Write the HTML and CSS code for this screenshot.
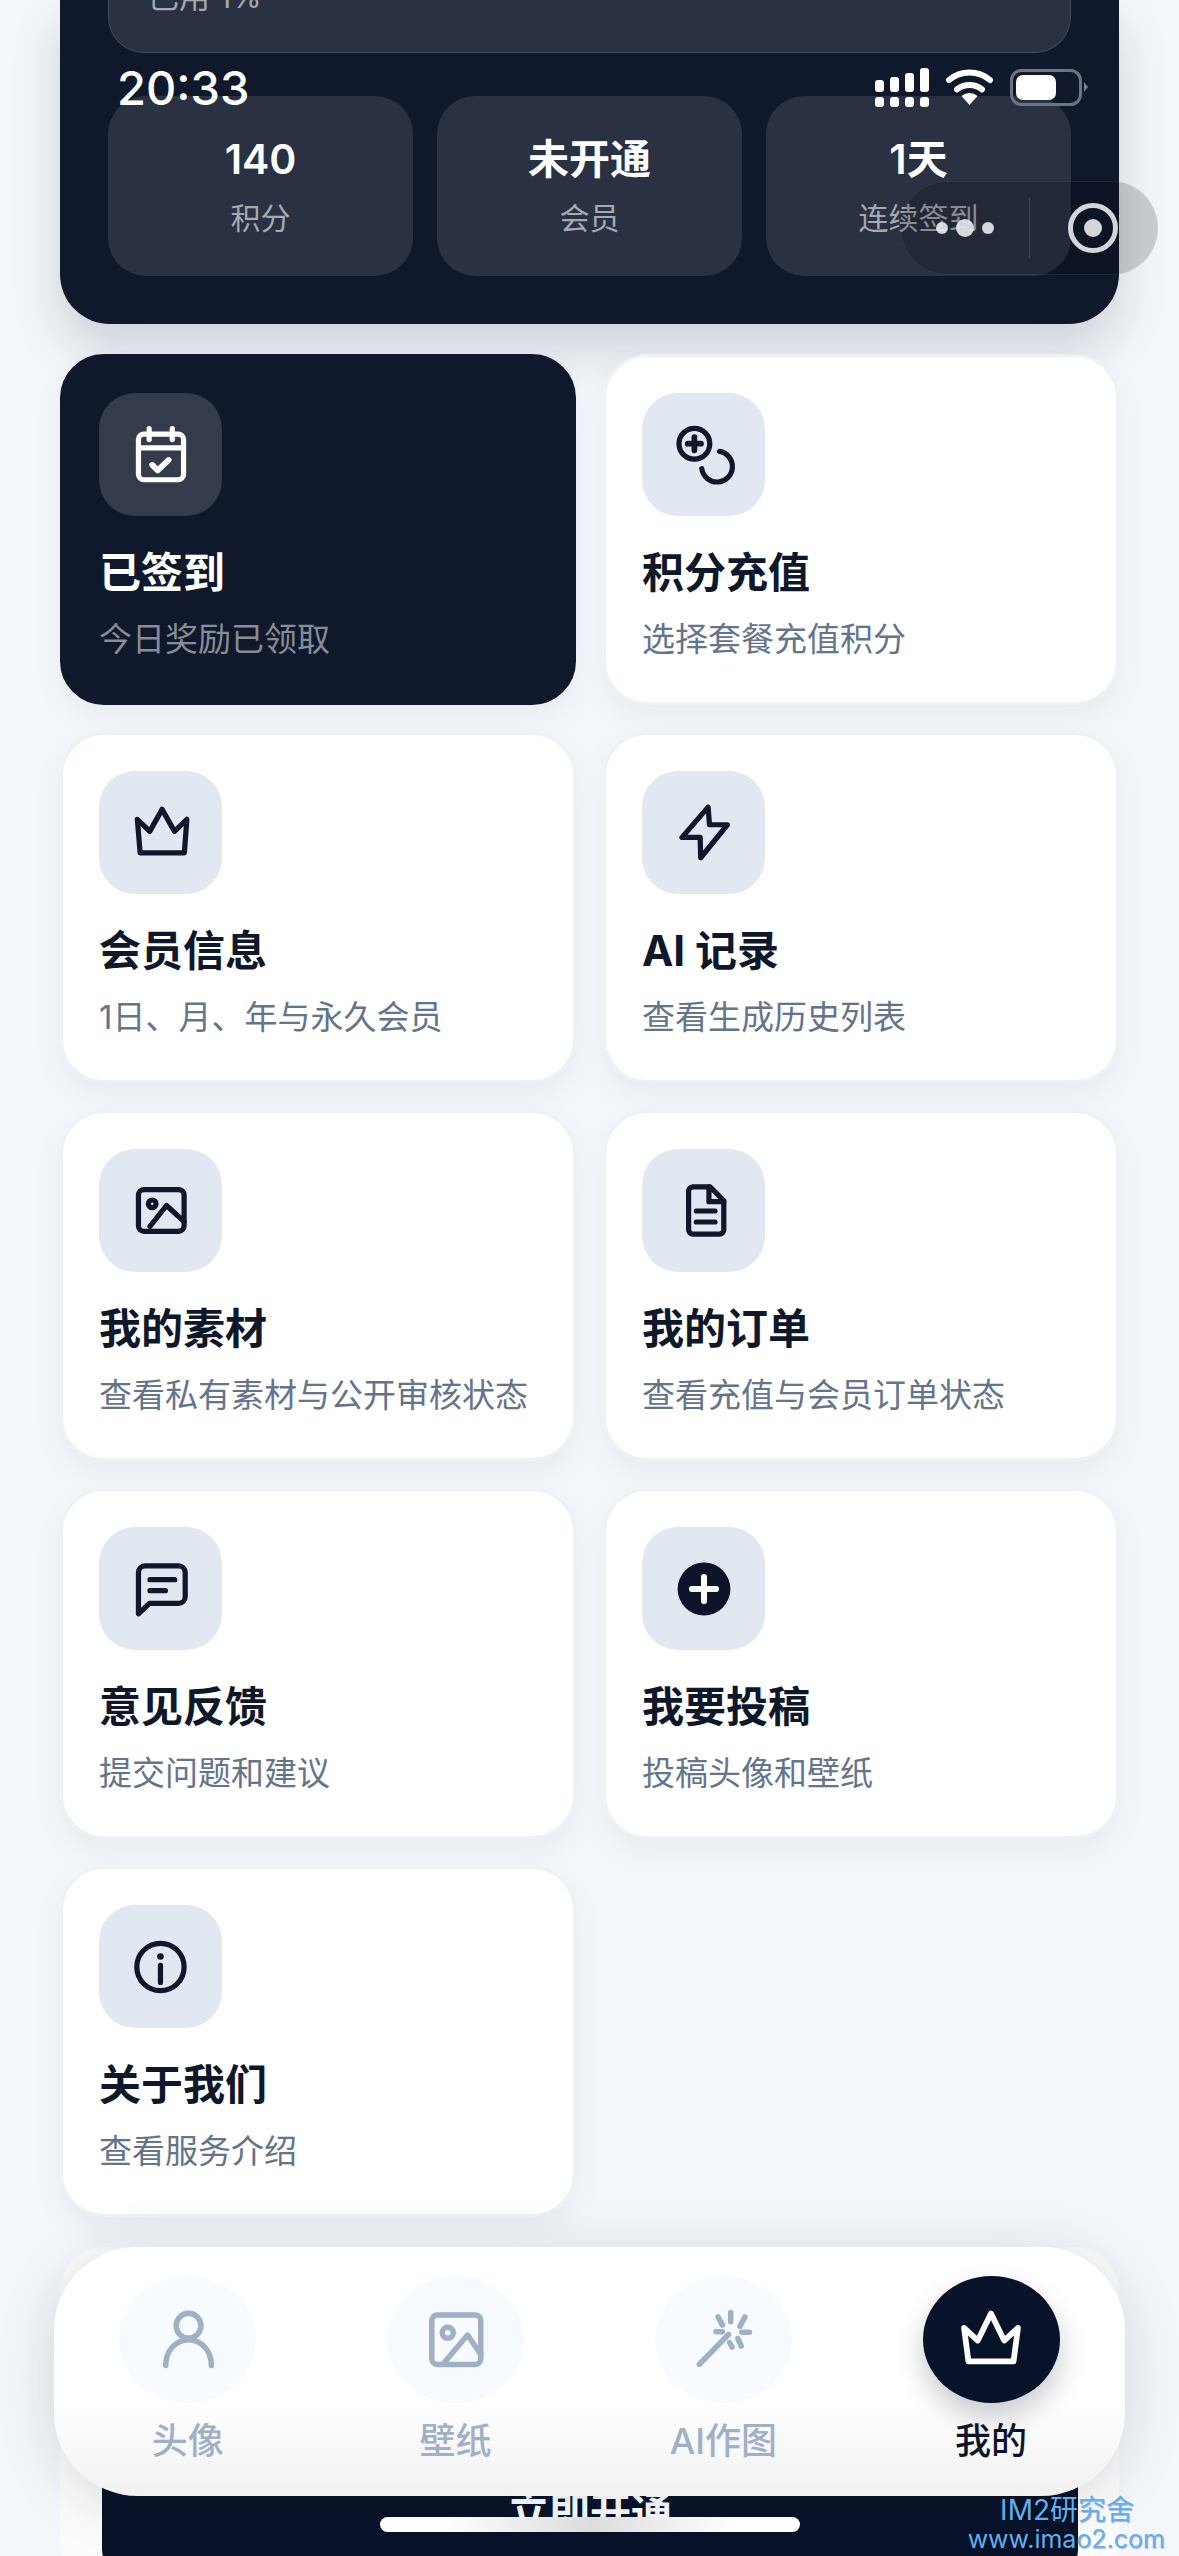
FILE: index.html
```html
<!DOCTYPE html>
<html lang="zh-CN">
<head>
  <meta charset="UTF-8">
  <title>我的</title>
  <link rel="stylesheet" href="styles.css">
</head>
<body>
  <div id="page">
    <!-- Account header, page is scrolled so the top is cut off -->
    <section class="hero">
      <div class="quota"><span class="quota-text">已用 1%</span></div>
      <div class="stats">
        <div class="stat"><div class="stat-value">140</div><div class="stat-label">积分</div></div>
        <div class="stat"><div class="stat-value">未开通</div><div class="stat-label">会员</div></div>
        <div class="stat"><div class="stat-value">1天</div><div class="stat-label">连续签到</div></div>
      </div>
    </section>

    <section class="grid">
      <div class="card card-dark">
        <div class="icon-box">
          <svg class="icon" viewBox="0 0 24 24"><rect x="3.8" y="4.4" width="16.4" height="16.6" rx="2"/><path d="M7.7 2.4v4M16.1 2.4v4M3.8 9.4h16.4"/><path class="thick" d="M8.8 15.6l2 2 4-3.8"/></svg>
        </div>
        <div class="card-title">已签到</div>
        <div class="card-sub">今日奖励已领取</div>
      </div>
      <div class="card">
        <div class="icon-box">
          <svg class="icon" viewBox="0 0 24 24"><circle cx="8.5" cy="7.9" r="5.6"/><path class="thick" d="M8.5 5.5v4.8M6.1 7.9h4.8"/><path d="M17.7 10.7A5.6 5.6 0 1 1 11.2 17"/></svg>
        </div>
        <div class="card-title">积分充值</div>
        <div class="card-sub">选择套餐充值积分</div>
      </div>
      <div class="card">
        <div class="icon-box">
          <svg class="icon" viewBox="0 0 24 24"><path d="M3.4 7l4.5 4.4 4.5-8 4.5 8 4.5-4.4-.9 12.2H4.4z"/></svg>
        </div>
        <div class="card-title">会员信息</div>
        <div class="card-sub">1日、月、年与永久会员</div>
      </div>
      <div class="card">
        <div class="icon-box">
          <svg class="icon" viewBox="0 0 24 24"><path d="M13.5 2.6L4 13.6h6.6l.2 7.4 9.7-12H14z"/></svg>
        </div>
        <div class="card-title">AI 记录</div>
        <div class="card-sub">查看生成历史列表</div>
      </div>
      <div class="card">
        <div class="icon-box">
          <svg class="icon" viewBox="0 0 24 24"><rect x="3.8" y="4.2" width="16.6" height="15.2" rx="2"/><circle cx="8.8" cy="9.4" r="1.4"/><path d="M8 17.6l6-7.6 6.4 5.8"/></svg>
        </div>
        <div class="card-title">我的素材</div>
        <div class="card-sub">查看私有素材与公开审核状态</div>
      </div>
      <div class="card">
        <div class="icon-box">
          <svg class="icon" viewBox="0 0 24 24"><path d="M8 3.2h6.2l5 5v10.6a1.6 1.6 0 0 1-1.6 1.6H8a1.6 1.6 0 0 1-1.6-1.6V4.8A1.6 1.6 0 0 1 8 3.2z"/><path d="M13.8 3.2v5.4h5.4M9.2 12H16M9.2 16H16"/></svg>
        </div>
        <div class="card-title">我的订单</div>
        <div class="card-sub">查看充值与会员订单状态</div>
      </div>
      <div class="card">
        <div class="icon-box">
          <svg class="icon" viewBox="0 0 24 24"><path d="M3.8 21V6a2.4 2.4 0 0 1 2.4-2.4h12.2A2.4 2.4 0 0 1 20.8 6v8.8a2.4 2.4 0 0 1-2.4 2.4H7.8z"/><path d="M8 8.6h9M8 12.6h5.6"/></svg>
        </div>
        <div class="card-title">意见反馈</div>
        <div class="card-sub">提交问题和建议</div>
      </div>
      <div class="card">
        <div class="icon-box">
          <svg class="icon" viewBox="0 0 24 24"><circle class="solid" cx="12" cy="12" r="9.6"/><path class="plus" d="M12 7.6v8.8M7.6 12h8.8"/></svg>
        </div>
        <div class="card-title">我要投稿</div>
        <div class="card-sub">投稿头像和壁纸</div>
      </div>
      <div class="card">
        <div class="icon-box">
          <svg class="icon" viewBox="0 0 24 24"><circle cx="11.8" cy="12" r="8.6"/><path d="M11.8 11.4v6.2"/><circle class="dot" cx="11.8" cy="8.2" r="1.2"/></svg>
        </div>
        <div class="card-title">关于我们</div>
        <div class="card-sub">查看服务介绍</div>
      </div>
    </section>

    <section class="vip-card">
      <div class="vip-btn">立即开通</div>
    </section>
  </div>

  <!-- Things lying over the page -->
  <div class="status-bar">
    <span class="time">20:33</span>
    <svg class="status-icons" width="213" height="40" viewBox="0 0 213 40">
      <g fill="#fff">
        <rect x="0" y="12" width="9" height="12" rx="3"/><rect x="15" y="9" width="9" height="15" rx="3"/>
        <rect x="30" y="5" width="9" height="19" rx="3"/><rect x="45" y="0" width="9" height="24" rx="3"/>
        <rect x="0" y="29" width="9" height="10" rx="3"/><rect x="15" y="29" width="9" height="10" rx="3"/>
        <rect x="30" y="29" width="9" height="10" rx="3"/><rect x="45" y="29" width="9" height="10" rx="3"/>
        <path d="M94.5 37L86.5 28a12 12 0 0 1 16 0z"/>
      </g>
      <path d="M74 12a32 32 0 0 1 41 0M82 21.4a20 20 0 0 1 25 0" fill="none" stroke="#fff" stroke-width="6" stroke-linecap="round"/>
      <rect x="136.5" y="2.5" width="69" height="34" rx="10" fill="none" stroke="#6e7482" stroke-width="3"/>
      <rect x="141" y="7" width="40" height="25" rx="7" fill="#fff"/>
      <path d="M209 14l4 5-4 5z" fill="#7b818d"/>
    </svg>
  </div>

  <div class="capsule">
    <div class="capsule-dots"><span class="cap-dot"></span><span class="cap-dot cap-dot-big"></span><span class="cap-dot"></span></div>
    <div class="capsule-line"></div>
    <div class="capsule-close"><span class="ring"><span class="ring-dot"></span></span></div>
  </div>

  <nav class="tabbar">
    <div class="tab">
      <div class="tab-circle">
        <svg class="tab-icon" viewBox="0 0 24 24"><circle cx="12.2" cy="6.8" r="4.5"/><path d="M3.9 21.3c0-5.2 3.5-9.4 8.3-9.4s8.3 4.2 8.3 9.4"/></svg>
      </div>
      <div class="tab-label">头像</div>
    </div>
    <div class="tab">
      <div class="tab-circle">
        <svg class="tab-icon" viewBox="0 0 24 24"><rect x="3.2" y="2.9" width="17.8" height="18" rx="2"/><circle cx="9" cy="9.4" r="2"/><path d="M7.6 20.4l8.6-10.2 4.8 7"/></svg>
      </div>
      <div class="tab-label">壁纸</div>
    </div>
    <div class="tab">
      <div class="tab-circle">
        <svg class="tab-icon" viewBox="0 0 24 24"><path d="M3.4 20.8L14 10M14.8 2v3.4M10.2 3.6l1.6 3M20 3.6L18.2 7M9.4 9h2.4M18.8 9.2h2.8M17.4 11.4l1.2 2.8M14.4 13l.9 1.6"/></svg>
      </div>
      <div class="tab-label">AI作图</div>
    </div>
    <div class="tab tab-active">
      <div class="tab-circle">
        <svg class="tab-icon" viewBox="0 0 24 24"><path d="M2.2 7.6l5 4.6L12 2.4l4.8 9.8 5-4.6-1.6 12.2H3.8z"/></svg>
      </div>
      <div class="tab-label">我的</div>
    </div>
  </nav>

  <div class="home-bar"></div>
  <div class="watermark"><div class="wm-name">IM2研究舍</div><div class="wm-url">www.imao2.com</div></div>
</body>
</html>
```

FILE: styles.css
```css
* {
  box-sizing: border-box;
}
html, body {
  margin: 0;
  height: 2556px;
  overflow: hidden;
}
body {
  position: relative;
  background-color: #f3f7fb;
  font-family: Inter, "Noto Sans CJK SC", sans-serif;
  color: #0f172a;
}
#page {
  padding: 0 60px;
}

/* header */
.hero {
  height: 324px;
  padding: 0 48px;
  background-color: #0f192b;
  border-radius: 0 0 50px 50px;
  box-shadow: 0 26px 50px rgba(15, 25, 43, 0.16);
}
.quota {
  height: 53px;
  padding-left: 39px;
  background-color: #2a3142;
  border: 1.5px solid #434a5b;
  border-top: none;
  border-radius: 0 0 36px 36px;
  overflow: hidden;
}
.quota-text {
  display: block;
  margin-top: -18px;
  line-height: 30px;
  font-size: 31px;
  color: #a5a9b2;
}
.stats {
  display: grid;
  grid-template-columns: repeat(3, 1fr);
  gap: 24px;
  margin-top: 43px;
}
.stat {
  height: 180px;
  padding-top: 38px;
  background-color: #2a3142;
  border-radius: 38px;
  text-align: center;
}
.stat-value {
  font-size: 41px;
  line-height: 50px;
  font-weight: 600;
  color: #fff;
}
.stat-label {
  margin-top: 14px;
  font-size: 30px;
  line-height: 40px;
  color: #a5a9b2;
}

/* menu cards */
.grid {
  display: grid;
  grid-template-columns: repeat(2, 1fr);
  gap: 27px;
  margin-top: 30px;
}
.card {
  height: 351px;
  padding: 36px;
  background-color: #fff;
  border: 3px solid #eef2f7;
  border-radius: 44px;
  box-shadow: 0 12px 32px rgba(15, 25, 43, 0.05);
}
.card-dark {
  background-color: #0f192b;
  border-color: #0f192b;
}
.icon-box {
  display: flex;
  align-items: center;
  justify-content: center;
  width: 123px;
  height: 123px;
  background-color: #e2e8f1;
  border-radius: 36px;
}
.card-dark .icon-box {
  background-color: #343b4a;
}
.icon {
  width: 66px;
  height: 66px;
  fill: none;
  stroke: #0f172a;
  stroke-width: 1.9;
  stroke-linecap: round;
  stroke-linejoin: round;
}
.card-dark .icon {
  stroke: #fff;
}
.icon .thick {
  stroke-width: 2.1;
}
.icon .solid {
  fill: #0b1428;
  stroke: none;
}
.icon .plus {
  stroke: #fff;
  stroke-width: 2.2;
}
.icon .dot {
  fill: #0f172a;
  stroke: none;
}
.card-title {
  margin-top: 31px;
  font-size: 42px;
  line-height: 52px;
  font-weight: 700;
}
.card-dark .card-title {
  color: #fff;
}
.card-sub {
  margin-top: 19px;
  font-size: 33px;
  line-height: 42px;
  color: #64748b;
  white-space: nowrap;
}
.card-dark .card-sub {
  color: #878c97;
}

/* card behind the tab bar */
.vip-card {
  height: 340px;
  margin-top: 30px;
  padding: 198px 41px 0 42px;
  background-color: #fbfbfb;
  border-radius: 44px;
}
.vip-btn {
  height: 134px;
  line-height: 134px;
  background-color: #081229;
  border-radius: 30px;
  text-align: center;
  font-size: 41px;
  font-weight: 700;
  color: #fff;
}

/* status bar */
.status-bar {
  position: absolute;
  top: 68px;
  left: 117px;
  width: 971px;
  display: flex;
  justify-content: space-between;
  align-items: flex-start;
}
.time {
  font-size: 47px;
  line-height: 40px;
  font-weight: 500;
  color: #fff;
}

/* mini program capsule */
.capsule {
  position: absolute;
  top: 181px;
  left: 900px;
  width: 258px;
  height: 94px;
  display: flex;
  align-items: center;
  background-color: rgba(0, 0, 0, 0.17);
  border: 1px solid rgba(255, 255, 255, 0.07);
  border-radius: 47px;
}
.capsule-dots {
  flex: 1;
  display: flex;
  align-items: center;
  justify-content: center;
  gap: 8px;
}
.cap-dot {
  width: 12px;
  height: 12px;
  border-radius: 50%;
  background-color: rgba(232, 234, 238, 0.9);
}
.cap-dot-big {
  width: 18px;
  height: 18px;
}
.capsule-line {
  width: 1px;
  height: 60px;
  background-color: rgba(255, 255, 255, 0.15);
}
.capsule-close {
  flex: 1;
  display: flex;
  align-items: center;
  justify-content: center;
}
.ring {
  display: flex;
  align-items: center;
  justify-content: center;
  width: 50px;
  height: 50px;
  border: 5px solid rgba(232, 234, 238, 0.9);
  border-radius: 50%;
}
.ring-dot {
  width: 18px;
  height: 18px;
  border-radius: 50%;
  background-color: rgba(232, 234, 238, 0.9);
}

/* tab bar */
.tabbar {
  position: absolute;
  top: 2247px;
  left: 54px;
  width: 1071px;
  height: 249px;
  display: grid;
  grid-template-columns: repeat(4, 1fr);
  padding-top: 29px;
  background: linear-gradient(180deg, #fff 0%, #fff 62%, #f1f1f2 100%);
  border-radius: 84px;
  box-shadow: 0 8px 60px rgba(15, 25, 43, 0.14);
}
.tab {
  display: flex;
  flex-direction: column;
  align-items: center;
}
.tab-circle {
  display: flex;
  align-items: center;
  justify-content: center;
  width: 137px;
  height: 127px;
  background-color: #f7fafe;
  border-radius: 50%;
}
.tab-icon {
  width: 66px;
  height: 66px;
  fill: none;
  stroke: #a0b0c6;
  stroke-width: 2;
  stroke-linecap: round;
  stroke-linejoin: round;
}
.tab-label {
  margin-top: 15px;
  font-size: 36px;
  line-height: 46px;
  font-weight: 500;
  color: #a0b0c6;
}
.tab-active .tab-circle {
  background-color: #081229;
  box-shadow: 0 14px 28px rgba(8, 18, 41, 0.22);
}
.tab-active .tab-icon {
  stroke: #fff;
  stroke-width: 2.1;
}
.tab-active .tab-label {
  color: #0b1428;
}

.home-bar {
  position: absolute;
  top: 2517px;
  left: 380px;
  width: 420px;
  height: 15px;
  background: linear-gradient(90deg, #fff 15%, #dcdcdc 50%, #fff 85%);
  border-radius: 8px;
}

.watermark {
  position: absolute;
  top: 2494px;
  right: 14px;
  text-align: right;
  color: #5fb0f2;
  text-shadow: 1px 1px 1px rgba(0, 0, 0, 0.25);
}
.wm-name {
  padding-right: 31px;
  font-size: 28px;
  line-height: 32px;
}
.wm-url {
  margin-top: -3px;
  font-size: 25px;
  line-height: 32px;
}
```
